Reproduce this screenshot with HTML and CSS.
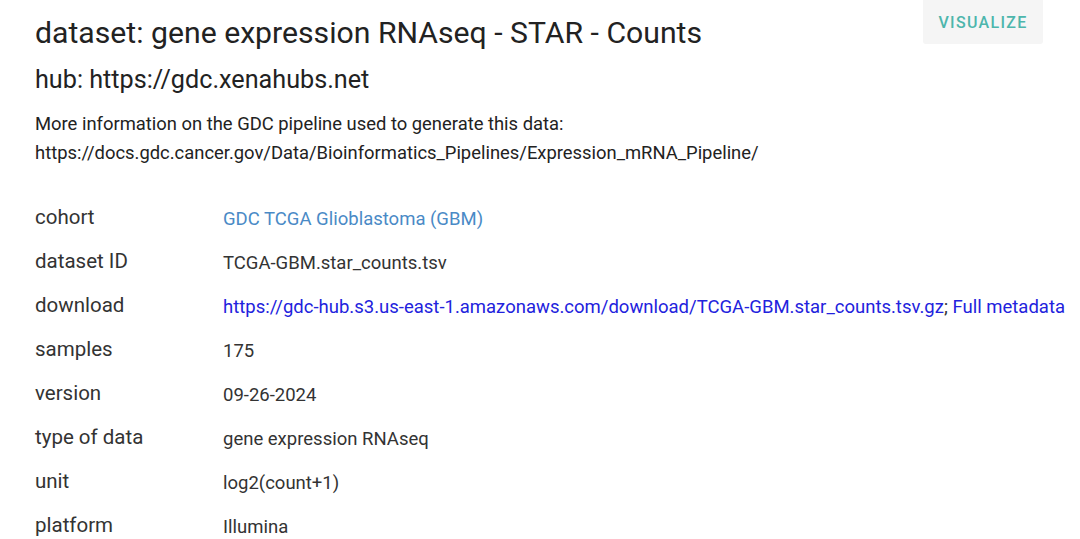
FILE: index.html
```html
<!DOCTYPE html>
<html>
<head>
<meta charset="utf-8">
<link rel="stylesheet" href="styles.css">
</head>
<body>
<div class="page">
  <div class="header">
    <div class="titles">
      <h1 class="title">dataset: gene expression RNAseq - STAR - Counts</h1>
      <h2 class="hub">hub: https://gdc.xenahubs.net</h2>
    </div>
    <button class="visualize">VISUALIZE</button>
  </div>
  <p class="desc">More information on the GDC pipeline used to generate this data:<br>https://docs.gdc.cancer.gov/Data/Bioinformatics_Pipelines/Expression_mRNA_Pipeline/</p>
  <div class="meta">
    <div class="label">cohort</div><div class="value"><a class="cohort" href="#">GDC TCGA Glioblastoma (GBM)</a></div>
    <div class="label">dataset ID</div><div class="value">TCGA-GBM.star_counts.tsv</div>
    <div class="label">download</div><div class="value"><a class="dl" href="#">https://gdc-hub.s3.us-east-1.amazonaws.com/download/TCGA-GBM.star_counts.tsv.gz</a>; <a class="dl" href="#">Full metadata</a></div>
    <div class="label">samples</div><div class="value">175</div>
    <div class="label">version</div><div class="value">09-26-2024</div>
    <div class="label">type of data</div><div class="value">gene expression RNAseq</div>
    <div class="label">unit</div><div class="value">log2(count+1)</div>
    <div class="label">platform</div><div class="value">Illumina</div>
  </div>
</div>
</body>
</html>
```
FILE: styles.css
```css
html, body {
  margin: 0;
  padding: 0;
  background: #ffffff;
}
body {
  font-family: Roboto, "Liberation Sans", sans-serif;
  color: #333333;
}
.page {
  padding: 0 17px 0 35px;
}
.header {
  display: flex;
  justify-content: space-between;
  align-items: flex-start;
}
.title {
  margin: 0;
  padding-top: 14px;
  font-size: 30.2px;
  font-weight: 400;
  line-height: 38px;
  color: #222222;
}
.hub {
  margin: 0;
  padding-top: 13px;
  font-size: 25.2px;
  font-weight: 400;
  line-height: 30px;
  color: #222222;
}
.visualize {
  margin-right: 20px;
  width: 120px;
  height: 44px;
  border: none;
  border-radius: 0 0 3px 3px;
  background: #f5f5f5;
  color: #4db6ac;
  font-family: Roboto, "Liberation Sans", sans-serif;
  font-size: 16px;
  font-weight: 500;
  letter-spacing: 1.3px;
  padding: 0;
}
.desc {
  margin: 14px 0 0 0;
  font-size: 18.4px;
  line-height: 29px;
  color: #222222;
}
.meta {
  display: grid;
  grid-template-columns: 188px auto;
  grid-auto-rows: 44px;
  align-items: center;
  margin-top: 28px;
}
.label {
  font-size: 20.5px;
  line-height: 24px;
  color: #333333;
}
.value {
  font-size: 18.5px;
  line-height: 24px;
  padding-top: 3px;
  color: #333333;
  white-space: nowrap;
}
.cohort {
  color: #4a8ac6;
  text-decoration: none;
}
.dl {
  color: #2222dd;
  text-decoration: none;
}
```
